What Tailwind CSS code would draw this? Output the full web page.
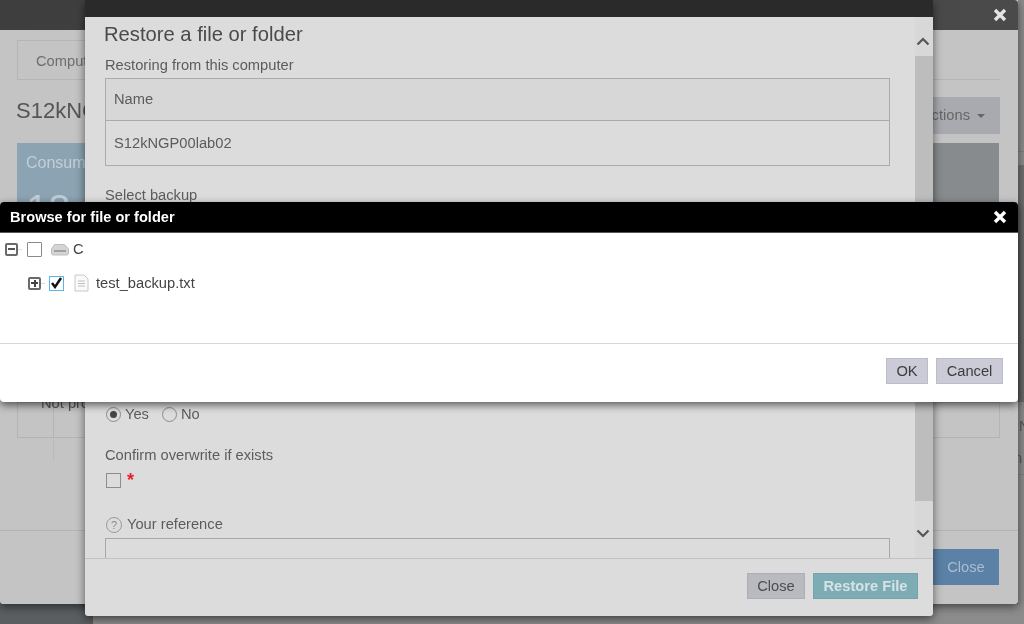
<!DOCTYPE html>
<html lang="en">
<head>
    <meta charset="UTF-8">
    <meta name="viewport" content="width=device-width, initial-scale=1.0">
    <title>Restore</title>
    <script src="https://cdn.jsdelivr.net/npm/@tailwindcss/browser@4"></script>
</head>
<body class="bg-[#5a5e61]">
<div class="relative w-[1024px] h-[624px] overflow-hidden blur-[0.5px] bg-[#5a5e61] font-['Liberation_Sans',Arial,sans-serif] text-[14.7px] text-[#5c5c5c]">

    <!-- page behind the dialogs -->
    <div class="absolute right-0 top-0 w-[6px] h-[624px] flex flex-col bg-[#8a8a8a] overflow-hidden text-[#555]">
        <div class="h-[152px] border-b border-[#7c7c7c] shrink-0"></div>
        <div class="h-[13px] shrink-0"></div>
        <div class="h-[237px] bg-[#6e6e6e] shrink-0"></div>
        <div class="h-[32px] flex items-end leading-[16px] pl-px shrink-0">N</div>
        <div class="h-[32px] flex items-end leading-[16px] -ml-[4px] shrink-0">n</div>
        <div class="border-t border-[#7c7c7c] mt-[8px]"></div>
    </div>
    <div class="absolute left-[93px] bottom-0 w-[931px] h-[20px] bg-[#8c8c8c]"></div>

    <!-- computer dialog (back) -->
    <div class="absolute left-0 top-0 w-[1018px] h-[604px] flex flex-col bg-[#c4c4c4] rounded-b-[3px] shadow-[0_3px_8px_rgba(0,0,0,0.5)]">
        <div class="h-[30px] shrink-0 bg-gradient-to-r from-[#3e3e3e] to-[#4a4a4a] flex justify-end items-center pr-[11px] rounded-tr-[4px]">
            <svg width="14" height="14" viewBox="0 0 14 14"><path d="M2 2l10 10M12 2L2 12" stroke="#e4e4e4" stroke-width="3.4"/></svg>
        </div>
        <div class="flex-1 flex flex-col pl-[17px] pr-[18px]">
            <div class="mt-[10px] h-[40px] border-b border-[#b4b4b4] shrink-0">
                <div class="w-[90px] h-[39px] border border-b-0 border-[#b4b4b4] pl-[18px] pt-[9px] text-[#6e6e6e]">Computer</div>
            </div>
            <div class="flex justify-between items-start mt-[17px] h-[37px] shrink-0">
                <span class="text-[22px] leading-[28px] text-[#555] -ml-px">S12kNGP00lab02</span>
                <div class="w-[67px] h-[37px] bg-[#a9aaaf] flex items-center justify-end gap-[7px] pr-[15px] text-[#666]">Actions
                    <span class="w-0 h-0 border-x-[4px] border-x-transparent border-t-[4px] border-t-[#666]"></span>
                </div>
            </div>
            <div class="flex justify-between mt-[9px] h-[60px] shrink-0">
                <div class="w-[150px] bg-[#8ba3b2] pl-[9px] pt-[10px] text-[16px] leading-[20px] text-[#c3ced5] overflow-hidden">Consumption
                    <div class="text-[40px] leading-[40px] mt-[16px]">18</div>
                </div>
                <div class="w-[66px] mr-px bg-[#888b8d]"></div>
            </div>
            <div class="mt-[199px] h-[36px] border border-[#b4b4b4] grid grid-cols-[36px_1fr] shrink-0">
                <div class="border-r border-[#b4b4b4]"></div>
                <div class="text-[#555] -mt-[8px] -ml-[13px] leading-[16px]">Not protected</div>
            </div>
            <div class="w-px h-[23px] ml-[36px] bg-[#bababa] shrink-0"></div>
        </div>
        <div class="mt-auto h-[74px] border-t border-[#b4b4b4] flex justify-end pt-[18px] pr-[19px] shrink-0">
            <div class="w-[66px] h-[36px] bg-[#5b81a6] text-[#a9bdd0] flex items-center justify-center">Close</div>
        </div>
    </div>

    <!-- restore dialog (middle) -->
    <div class="absolute left-[85px] top-0 w-[848px] h-[616px] flex flex-col bg-[#dcdcdc] rounded-b-[3px] shadow-[0_3px_10px_rgba(0,0,0,0.55)]">
        <div class="h-[17px] shrink-0 bg-[#2a2a2a]"></div>
        <div class="flex-1 flex min-h-0">
            <div class="flex-1 min-w-0 overflow-hidden pl-[20px] pr-[25px]">
                <h2 class="text-[20.2px] leading-[34px] text-[#4a4a4a] -ml-px">Restore a file or folder</h2>
                <div class="leading-[16px] mt-[6px]">Restoring from this computer</div>
                <div class="mt-[5px] border border-[#ababab] h-[88px]">
                    <div class="h-[42px] bg-[#d7d7d7] border-b border-[#ababab] flex items-center pl-[8px]">Name</div>
                    <div class="h-[44px] flex items-center pl-[8px]">S12kNGP00lab02</div>
                </div>
                <div class="mt-[21px] leading-[16px]">Select backup</div>
                <div class="mt-[203px] flex items-center h-[16px]">
                    <span class="w-[15px] h-[15px] ml-[1px] rounded-full border border-[#8c8c8c] flex items-center justify-center"><span class="w-[7px] h-[7px] rounded-full bg-[#444]"></span></span>
                    <span class="ml-[4px]">Yes</span>
                    <span class="w-[15px] h-[15px] ml-[13px] rounded-full border border-[#8c8c8c]"></span>
                    <span class="ml-[4px]">No</span>
                </div>
                <div class="mt-[25px] leading-[16px]">Confirm overwrite if exists</div>
                <div class="mt-[10px] flex items-start h-[16px]">
                    <span class="w-[15px] h-[15px] ml-[1px] border border-[#8c8c8c]"></span>
                    <span class="ml-[6px] -mt-[1px] text-[#e8222a] font-bold text-[18px] leading-[16px]">*</span>
                </div>
                <div class="mt-[27px] flex items-center h-[16px]">
                    <span class="w-[16px] h-[16px] ml-[1px] mt-[2px] rounded-full border border-[#9a9a9a] text-[11px] text-[#8a8a8a] flex items-center justify-center">?</span>
                    <span class="ml-[5px]">Your reference</span>
                </div>
                <div class="mt-[6px] h-[40px] border border-[#a8a8a8]"></div>
            </div>
            <!-- scrollbar -->
            <div class="w-[18px] shrink-0 flex flex-col bg-[#d8d8d8]">
                <div class="h-[39px] flex items-center justify-center pt-[10px] pr-[2px]">
                    <svg width="14" height="9" viewBox="0 0 14 9"><path d="M1.500 7.500L7 2l5.500 5.500" fill="none" stroke="#555" stroke-width="2.2"/></svg>
                </div>
                <div class="h-[445px] bg-[#bdbdbd]"></div>
                <div class="flex-1 flex items-center justify-center pt-[7px] pr-[2px]">
                    <svg width="14" height="9" viewBox="0 0 14 9"><path d="M1.500 1.500L7 7l5.500-5.500" fill="none" stroke="#555" stroke-width="2.2"/></svg>
                </div>
            </div>
        </div>
        <div class="h-[58px] shrink-0 border-t border-[#c2c2c2] flex justify-end gap-[8px] pt-[14px] pr-[15px]">
            <div class="w-[58px] h-[26px] bg-[#b9bac0] border border-[#aeafb6] flex items-center justify-center text-[#4d4d4d]">Close</div>
            <div class="w-[105px] h-[26px] bg-[#7eacb4] border border-[#74a3ab] flex items-center justify-center font-bold text-[#d5e3e6]">Restore File</div>
        </div>
    </div>

    <!-- browse dialog (front) -->
    <div class="absolute left-0 top-[202px] w-[1018px] h-[200px] flex flex-col bg-white rounded-[4px] shadow-[0_3px_8px_rgba(0,0,0,0.6)]">
        <div class="h-[31px] shrink-0 bg-black rounded-t-[4px] flex items-center justify-between pl-[10px] pr-[11px] border-b border-[#555]">
            <span class="font-bold text-white text-[14.6px] pt-[2px]">Browse for file or folder</span>
            <svg width="14" height="14" viewBox="0 0 14 14"><path d="M2 2l10 10M12 2L2 12" stroke="#fff" stroke-width="3.4"/></svg>
        </div>
        <div class="flex-1 text-[#444]">
            <div class="flex items-center h-[20px] mt-[6px] pl-[5px]">
                <span class="w-[13px] h-[13px] border-2 border-[#6a6a6a] rounded-[2px] flex items-center justify-center"><span class="w-[7px] h-[2px] bg-[#555]"></span></span>
                <span class="w-[4px] h-px bg-[#ddd]"></span>
                <span class="w-[15px] h-[15px] ml-[5px] border border-[#8a8a8a] rounded-[1px]"></span>
                <svg class="ml-[8px]" width="20" height="14" viewBox="0 0 20 14"><path d="M1.500 7L4.500 2.500h10l4 4.500v4a2 2 0 0 1-2 2H3.500a2 2 0 0 1-2-2z" fill="#d4d4d4" stroke="#bdbdbd"/><path d="M4 8h12v2H4z" fill="#a0a0a0"/></svg>
                <span class="ml-[3px]">C</span>
            </div>
            <div class="flex items-center h-[20px] mt-[14px] pl-[28px]">
                <span class="w-[13px] h-[13px] border-2 border-[#6a6a6a] rounded-[2px] relative flex items-center justify-center"><span class="absolute w-[7px] h-[2px] bg-[#444]"></span><span class="absolute w-[2px] h-[7px] bg-[#444]"></span></span>
                <span class="w-[4px] h-px bg-[#ddd]"></span>
                <span class="w-[15px] h-[15px] ml-[4px] border border-[#5cb3e6] flex items-center justify-center">
                    <svg width="13" height="12" viewBox="0 0 13 12"><path d="M2 6l3 4 6-9" fill="none" stroke="#111" stroke-width="2.4"/></svg>
                </span>
                <svg class="ml-[10px]" width="15" height="18" viewBox="0 0 15 18"><path d="M1 1h9l4 4v12H1z" fill="#fafafa" stroke="#c8c8c8"/><path d="M4 7h7M4 9.500h7M4 12h7" stroke="#c0c0c0"/></svg>
                <span class="ml-[7px]">test_backup.txt</span>
            </div>
        </div>
        <div class="h-[59px] shrink-0 border-t border-[#d8d8d8] flex justify-end gap-[8px] pt-[14px] pr-[15px]">
            <div class="w-[42px] h-[26px] bg-[#cbcbd8] border border-[#bdbdca] flex items-center justify-center text-[#3d3d3d]">OK</div>
            <div class="w-[67px] h-[26px] bg-[#cbcbd8] border border-[#bdbdca] flex items-center justify-center text-[#3d3d3d]">Cancel</div>
        </div>
    </div>
</div>
</body>
</html>
